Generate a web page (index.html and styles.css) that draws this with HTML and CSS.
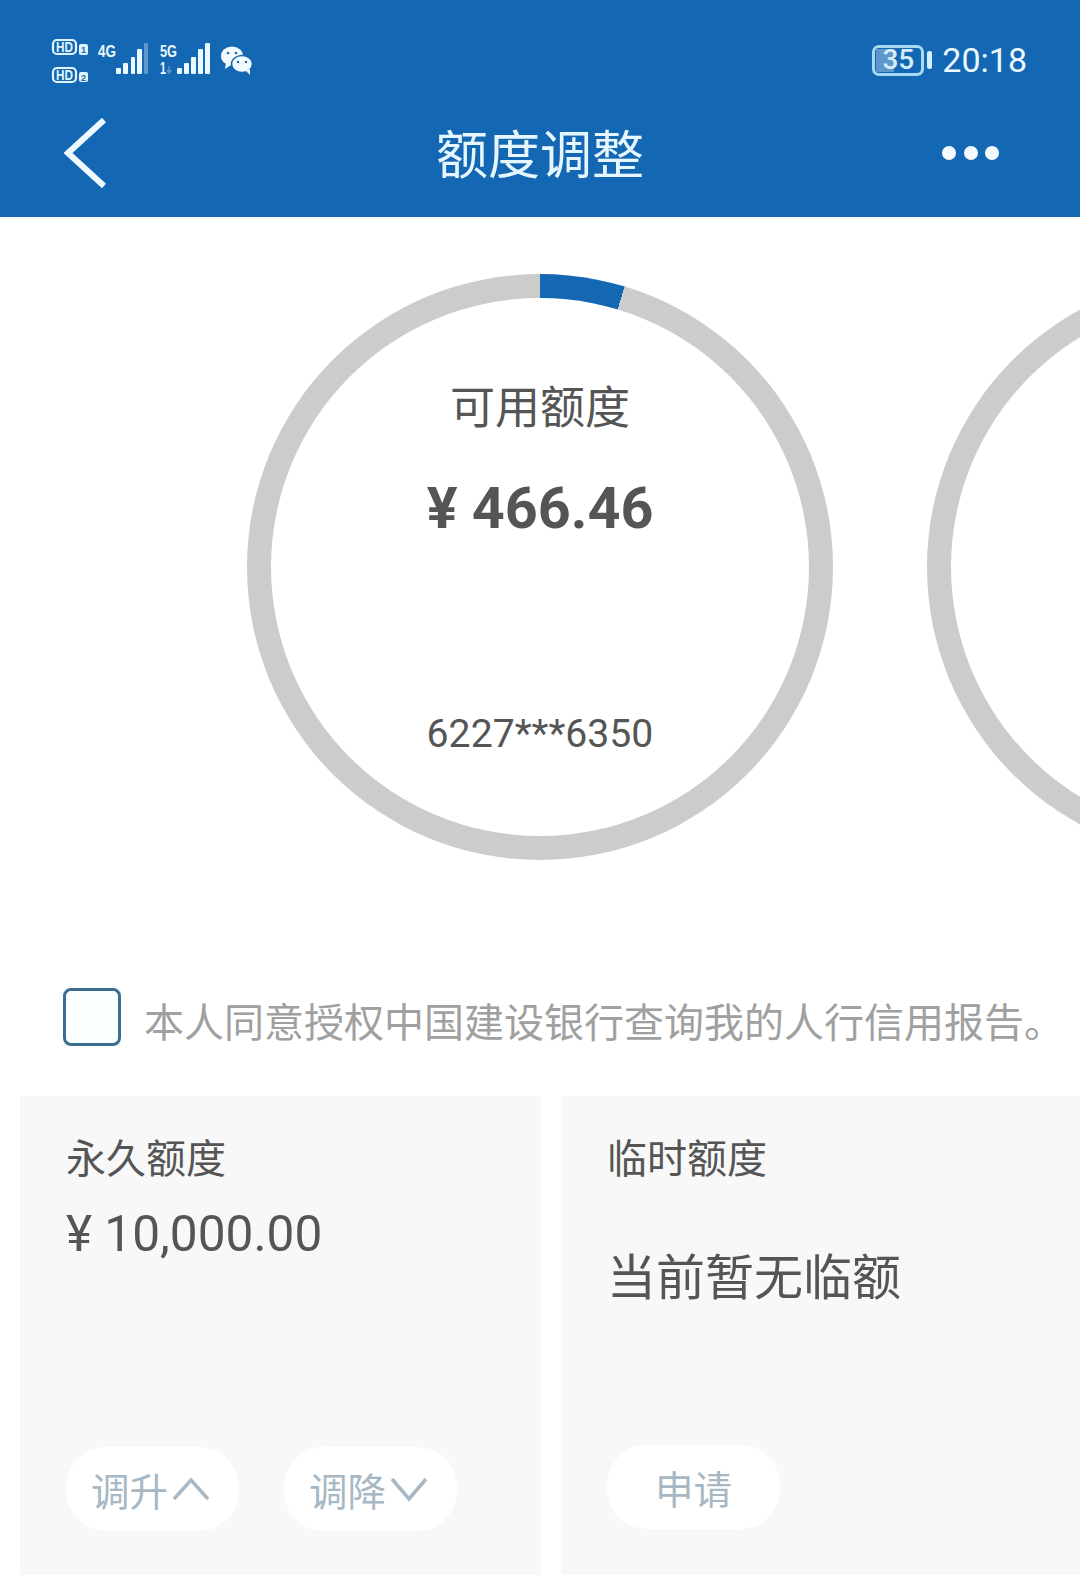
FILE: index.html
```html
<!DOCTYPE html>
<html lang="zh-CN">
<head>
    <meta charset="UTF-8">
    <meta name="viewport" content="width=device-width, initial-scale=1.0">
    <title>额度调整</title>
    <link rel="stylesheet" href="styles.css">
</head>
<body>
    <header class="top">
        <div class="status">
            <svg class="status-icons" width="205" height="48" viewBox="0 0 205 48">
                <!-- HD 1 / HD 2 -->
                <rect x="3" y="4" width="23" height="14" rx="4" fill="none" stroke="#dff4ff" stroke-width="2.2"/>
                <text x="14.500" y="16" class="tiny" text-anchor="middle" textLength="17" lengthAdjust="spacingAndGlyphs">HD</text>
                <rect x="29" y="8" width="9" height="11" rx="2" fill="#dff4ff"/>
                <text x="33.500" y="17" class="digit" text-anchor="middle">1</text>
                <rect x="3" y="32" width="23" height="14" rx="4" fill="none" stroke="#dff4ff" stroke-width="2.2"/>
                <text x="14.500" y="44" class="tiny" text-anchor="middle" textLength="17" lengthAdjust="spacingAndGlyphs">HD</text>
                <rect x="29" y="36" width="9" height="10" rx="2" fill="#dff4ff"/>
                <text x="33.500" y="45" class="digit" text-anchor="middle">2</text>
                <!-- sim 1 -->
                <text x="48" y="21" class="net" textLength="18" lengthAdjust="spacingAndGlyphs">4G</text>
                <rect x="66" y="32" width="5" height="6" rx="1" fill="#eaf8ff"/>
                <rect x="73" y="27" width="5" height="11" rx="1" fill="#eaf8ff"/>
                <rect x="81" y="21" width="4" height="17" rx="1" fill="#eaf8ff"/>
                <rect x="87" y="13" width="5" height="25" rx="1" fill="#eaf8ff"/>
                <rect x="94" y="7" width="4" height="31" rx="1" fill="#5d97cb"/>
                <!-- sim 2 -->
                <text x="110" y="21" class="net" textLength="17" lengthAdjust="spacingAndGlyphs">5G</text>
                <text x="110" y="38" class="net" textLength="6" lengthAdjust="spacingAndGlyphs">1</text>
                <path d="M119 30v6m-2-2l2 3 2-3" fill="none" stroke="#5d97cb" stroke-width="1.500"/>
                <rect x="127" y="32" width="5" height="6" rx="1" fill="#eaf8ff"/>
                <rect x="134" y="27" width="5" height="11" rx="1" fill="#eaf8ff"/>
                <rect x="141" y="21" width="5" height="17" rx="1" fill="#eaf8ff"/>
                <rect x="148" y="13" width="5" height="25" rx="1" fill="#eaf8ff"/>
                <rect x="155" y="7" width="5" height="31" rx="1" fill="#eaf8ff"/>
                <!-- wechat -->
                <ellipse cx="182" cy="20" rx="11" ry="9.500" fill="#f2fbff"/>
                <path d="M176 27l-1 6 6-4z" fill="#f2fbff"/>
                <ellipse cx="192" cy="28" rx="10.500" ry="8.500" fill="#f2fbff" stroke="#1467b3" stroke-width="1.500"/>
                <path d="M196 35l4 4 0-6z" fill="#f2fbff"/>
                <circle cx="178" cy="17" r="1.300" fill="#1467b3"/>
                <circle cx="186" cy="17" r="1.300" fill="#1467b3"/>
                <circle cx="188" cy="26" r="1.200" fill="#1467b3"/>
                <circle cx="196" cy="26" r="1.200" fill="#1467b3"/>
            </svg>
            <div class="status-right">
                <div class="battery">
                    <div class="battery-body"><span class="battery-fill"></span><span class="battery-num">35</span></div>
                    <span class="battery-nub"></span>
                </div>
                <span class="time">20:18</span>
            </div>
        </div>
        <nav class="nav">
            <svg class="back" width="46" height="72" viewBox="0 0 46 72">
                <path d="M40 3L4 36l36 33" fill="none" stroke="#eefaff" stroke-width="6"/>
            </svg>
            <h1 class="title">额度调整</h1>
            <div class="more"><i></i><i></i><i></i></div>
        </nav>
    </header>

    <section class="rings">
        <div class="ring ring-main">
            <div class="ring-inner">
                <p class="ring-label">可用额度</p>
                <p class="ring-amount">¥ 466.46</p>
                <p class="ring-card">6227***6350</p>
            </div>
        </div>
        <div class="ring">
            <div class="ring-inner"></div>
        </div>
    </section>

    <section class="agree">
        <span class="checkbox"></span>
        <span class="agree-text">本人同意授权中国建设银行查询我的人行信用报告。</span>
    </section>

    <section class="cards">
        <div class="card">
            <p class="card-label">永久额度</p>
            <p class="card-money">¥ 10,000.00</p>
            <div class="card-actions">
                <a class="pill">调升<svg width="38" height="26" viewBox="0 0 38 26"><path d="M2 23L19 4l17 19" fill="none" stroke="#a7b8c4" stroke-width="3.500"/></svg></a>
                <a class="pill">调降<svg width="38" height="26" viewBox="0 0 38 26"><path d="M2 3l17 20L36 3" fill="none" stroke="#a7b8c4" stroke-width="3.500"/></svg></a>
            </div>
        </div>
        <div class="card">
            <p class="card-label">临时额度</p>
            <p class="card-none">当前暂无临额</p>
            <div class="card-actions">
                <a class="pill pill-apply">申请</a>
            </div>
        </div>
    </section>
</body>
</html>
```

FILE: styles.css
```css
html, body {
    margin: 0;
    padding: 0;
    height: 1590px;
    overflow: hidden;
    background: #fff;
    font-family: Roboto, "Noto Sans CJK SC", sans-serif;
}

p, h1 {
    margin: 0;
    font-weight: 400;
}

/* header */
.top {
    height: 217px;
    background-color: #1467b3;
    color: #eaf8ff;
}

.status {
    display: flex;
    justify-content: space-between;
    align-items: center;
    height: 48px;
    padding: 36px 53px 0 50px;
}

.status-icons {
    display: block;
}

.tiny {
    font: 700 14px "Liberation Sans", sans-serif;
    fill: #dff4ff;
}

.digit {
    font: 700 9px "Liberation Sans", sans-serif;
    fill: #1467b3;
}

.net {
    font: 700 17px "Liberation Sans", sans-serif;
    fill: #eaf8ff;
}

.status-right {
    display: flex;
    align-items: center;
    gap: 10px;
}

.battery {
    display: flex;
    align-items: center;
    gap: 3px;
}

.battery-body {
    display: flex;
    align-items: center;
    justify-content: center;
    position: relative;
    box-sizing: border-box;
    width: 52px;
    height: 31px;
    border: 3px solid #a9d8f2;
    border-radius: 7px;
}

.battery-fill {
    position: absolute;
    left: 1px;
    top: 1px;
    bottom: 1px;
    width: 18px;
    background-color: #5d97cb;
}

.battery-num {
    position: relative;
    font-size: 28px;
    font-weight: 500;
    line-height: 1;
    color: #d4eefc;
}

.battery-nub {
    width: 5px;
    height: 18px;
    border-radius: 2px;
    background-color: #d4eefc;
}

.time {
    font-size: 34px;
    line-height: 1;
}

.nav {
    display: grid;
    grid-template-columns: 1fr auto 1fr;
    align-items: start;
    padding: 33px 64px 0 64px;
}

.back {
    display: block;
}

.title {
    margin-top: 4px;
    font-size: 52px;
    line-height: 72px;
    color: #e6f6ff;
}

.more {
    display: flex;
    justify-content: flex-end;
    gap: 7.500px;
    margin-top: 29px;
    padding-right: 17px;
}

.more i {
    width: 14px;
    height: 14px;
    border-radius: 50%;
    background-color: #f4fcff;
}

/* rings */
.rings {
    display: flex;
    gap: 94px;
    box-sizing: border-box;
    width: 1080px;
    overflow: hidden;
    padding: 57px 0 0 247px;
}

.ring {
    flex: none;
    box-sizing: border-box;
    width: 586px;
    height: 586px;
    padding: 24px;
    border-radius: 50%;
    background: #ccc;
}

.ring-main {
    background: conic-gradient(#1467b3 0 4.66%, #ccc 4.66% 100%);
}

.ring-inner {
    display: flex;
    flex-direction: column;
    align-items: center;
    height: 100%;
    border-radius: 50%;
    background: #fff;
    color: #555;
}

.ring-label {
    margin-top: 79px;
    font-size: 45px;
    line-height: 64px;
}

.ring-amount {
    margin-top: 33px;
    font-size: 57.500px;
    font-weight: 700;
    line-height: 70px;
}

.ring-card {
    margin-top: 165px;
    font-size: 39.200px;
    line-height: 50px;
}

/* agreement */
.agree {
    display: flex;
    align-items: flex-start;
    gap: 23px;
    margin-top: 128px;
    padding-left: 63px;
}

.checkbox {
    flex: none;
    box-sizing: border-box;
    width: 58px;
    height: 58px;
    border: 3.500px solid #3b6e8f;
    border-radius: 8px;
    background-color: #fbfeff;
}

.agree-text {
    padding-top: 13px;
    font-size: 40px;
    line-height: 45px;
    white-space: nowrap;
    color: #a0a0a0;
}

/* cards */
.cards {
    display: grid;
    grid-template-columns: 521px 519px;
    gap: 20px;
    margin-top: 50px;
    padding-left: 20px;
}

.card {
    display: flex;
    flex-direction: column;
    box-sizing: border-box;
    height: 479px;
    padding: 36px 0 44px 46px;
    background-color: #f8f8f8;
    color: #555;
}

.card-label {
    font-size: 40px;
    line-height: 56px;
}

.card-money {
    margin-top: 17px;
    font-size: 49.600px;
    line-height: 58px;
}

.card-none {
    margin-top: 56px;
    font-size: 49px;
    line-height: 70px;
}

.card-actions {
    display: flex;
    gap: 45px;
    margin-top: auto;
}

.pill {
    display: flex;
    align-items: center;
    box-sizing: border-box;
    width: 173px;
    height: 84px;
    padding-left: 25px;
    border-radius: 40px;
    background-color: #fff;
    font-size: 38.500px;
    color: #a7b8c4;
}

.pill svg {
    margin-left: 4px;
}

.pill-apply {
    justify-content: center;
    padding-left: 0;
    margin-bottom: 2px;
}
```
